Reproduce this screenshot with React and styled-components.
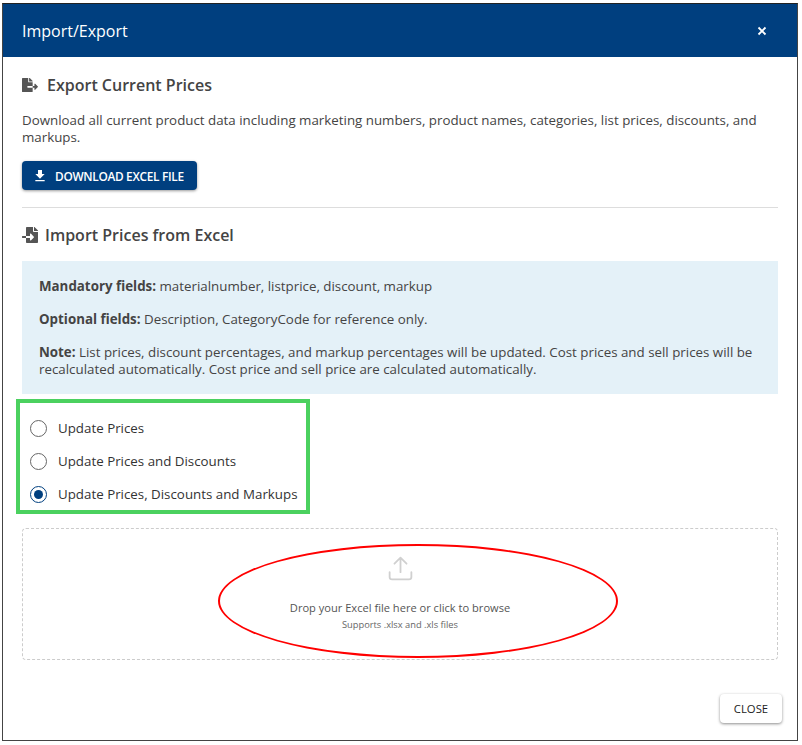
import React from "react";
import styled, { createGlobalStyle } from "styled-components";
import { FaFileExport, FaFileImport } from "react-icons/fa";

const Global = createGlobalStyle`
  html, body { margin: 0; padding: 0; background: #fff; }
  body { font-family: "Open Sans", "Liberation Sans", sans-serif; color: #333; }
  * { box-sizing: border-box; }
`;

const Page = styled.div`
  width: 802px;
  height: 745px;
  padding: 3px 4px 4px 2px;
  background: #fff;
`;

const Dialog = styled.div`
  position: relative;
  width: 796px;
  height: 738px;
  border: 1px solid #444;
  border-top-color: #222;
  display: flex;
  flex-direction: column;
`;

const Header = styled.header`
  height: 53px;
  flex: none;
  background: #003f7f;
  color: #fff;
  display: flex;
  align-items: center;
  justify-content: space-between;
  padding: 0 29px 0 19px;
  font-size: 16px;
`;

const CloseIcon = styled.svg`
  width: 12px;
  height: 12px;
  display: block;
`;

const Body = styled.main`
  flex: 1;
  padding: 16px 19px 0;
  display: flex;
  flex-direction: column;
`;

const SectionTitle = styled.h2`
  margin: 0;
  height: 24px;
  display: flex;
  align-items: center;
  gap: ${(p) => p.$gap}px;
  font-size: 16px;
  line-height: 24px;
  font-weight: 600;
  color: #444;
  svg { color: #555; font-size: 16px; flex: none; }
`;

const Text = styled.p`
  margin: 15px 0 0;
  font-size: 13.33px;
  line-height: 17px;
  color: #444;
`;

const Primary = styled.button`
  margin-top: 15px;
  width: 175px;
  height: 29px;
  border: 0;
  border-radius: 4px;
  padding: 0 0 0 10px;
  background: #003f7f;
  color: #fff;
  font: 600 11.85px "Open Sans", sans-serif;
  letter-spacing: -0.3px;
  display: flex;
  align-items: center;
  gap: 7px;
  box-shadow: 0 1px 3px rgba(0, 0, 0, 0.4);
`;

const Divider = styled.hr`
  margin: 17px 0 15px;
  border: 0;
  border-top: 1px solid #ddd;
`;

const Notice = styled.div`
  margin-top: 14px;
  height: 133px;
  background: #e4f1f8;
  padding: 17px 17px 0;
  font-size: 13.33px;
  line-height: 17px;
  color: #444;
  display: flex;
  flex-direction: column;
  gap: 16px;
  strong { font-weight: 700; }
`;

const NoticeLine = styled.div``;

const RadioGroup = styled.div`
  margin: 5px 0 0 -6px;
  width: 294px;
  height: 115px;
  border: 4px solid #4bd15f;
  padding: 14px 0 0 10px;
  display: flex;
  flex-direction: column;
  gap: 11px;
`;

const RadioRow = styled.label`
  height: 22px;
  display: flex;
  align-items: center;
  gap: 11px;
  font-size: 13.33px;
  color: #333;
`;

const RadioMark = styled.span`
  width: 17px;
  height: 17px;
  border-radius: 50%;
  border: 1.5px solid ${(p) => (p.$on ? "#003f7f" : "#666")};
  display: flex;
  align-items: center;
  justify-content: center;
  &::after {
    content: "";
    display: ${(p) => (p.$on ? "block" : "none")};
    width: 9px;
    height: 9px;
    border-radius: 50%;
    background: #003f7f;
  }
`;

const DropZone = styled.div`
  margin-top: 14px;
  height: 132px;
  border: 1px dashed #ccc;
  border-radius: 4px;
  display: flex;
  flex-direction: column;
  align-items: center;
  padding-top: 25px;
`;

const UploadIcon = styled.svg`
  width: 29px;
  height: 29px;
  display: block;
  fill: none;
  stroke: #d0d0d0;
  stroke-width: 1.5;
  stroke-linecap: round;
  stroke-linejoin: round;
`;

const DropTitle = styled.div`
  margin-top: 17px;
  font-size: 11.1px;
  line-height: 15px;
  color: #555;
`;

const DropHint = styled.div`
  margin-top: 3px;
  font-size: 9.3px;
  line-height: 13px;
  color: #666;
`;

const Footer = styled.footer`
  flex: none;
  height: 52px;
  display: flex;
  justify-content: flex-end;
  align-items: flex-start;
  padding: 6px 15px 0 0;
`;

const CloseButton = styled.button`
  width: 62px;
  height: 29px;
  border: 0;
  border-radius: 4px;
  background: #fff;
  color: #222;
  font: 400 11.3px "Open Sans", sans-serif;
  box-shadow: 0 1px 3px rgba(0, 0, 0, 0.45);
`;

const Ellipse = styled.div`
  position: absolute;
  left: 215px;
  top: 540px;
  width: 400px;
  height: 114px;
  border: 2px solid #f00;
  border-radius: 50%;
  pointer-events: none;
`;

export default function App() {
  return (
    <Page>
      <Global />
      <Dialog>
        <Header>
          <span>Import/Export</span>
          <CloseIcon viewBox="0 0 12 12" aria-hidden="true">
            <path d="M2.5 2.5l7 7M9.5 2.5l-7 7" stroke="#fff" strokeWidth="1.8" fill="none" />
          </CloseIcon>
        </Header>
        <Body>
          <SectionTitle $gap={9}>
            <FaFileExport />
            Export Current Prices
          </SectionTitle>
          <Text>
            Download all current product data including marketing numbers, product names, categories, list prices, discounts, and markups.
          </Text>
          <Primary>
            <svg width="16" height="16" viewBox="0 0 24 24" fill="#fff" aria-hidden="true">
              <path d="M5 20h14v-2H5v2zM19 9h-4V3H9v6H5l7 7 7-7z" />
            </svg>
            DOWNLOAD EXCEL FILE
          </Primary>
          <Divider />
          <SectionTitle $gap={7}>
            <FaFileImport />
            Import Prices from Excel
          </SectionTitle>
          <Notice>
            <NoticeLine><strong>Mandatory fields:</strong> materialnumber, listprice, discount, markup</NoticeLine>
            <NoticeLine><strong>Optional fields:</strong> Description, CategoryCode for reference only.</NoticeLine>
            <NoticeLine><strong>Note:</strong> List prices, discount percentages, and markup percentages will be updated. Cost prices and sell prices will be recalculated automatically. Cost price and sell price are calculated automatically.</NoticeLine>
          </Notice>
          <RadioGroup>
            <RadioRow><RadioMark />Update Prices</RadioRow>
            <RadioRow><RadioMark />Update Prices and Discounts</RadioRow>
            <RadioRow><RadioMark $on />Update Prices, Discounts and Markups</RadioRow>
          </RadioGroup>
          <DropZone>
            <UploadIcon viewBox="0 0 24 24" aria-hidden="true">
              <path d="M21 15v4a2 2 0 0 1-2 2H5a2 2 0 0 1-2-2v-4M17 8l-5-5-5 5M12 3v12" />
            </UploadIcon>
            <DropTitle>Drop your Excel file here or click to browse</DropTitle>
            <DropHint>Supports .xlsx and .xls files</DropHint>
          </DropZone>
        </Body>
        <Footer>
          <CloseButton>CLOSE</CloseButton>
        </Footer>
        <Ellipse />
      </Dialog>
    </Page>
  );
}
